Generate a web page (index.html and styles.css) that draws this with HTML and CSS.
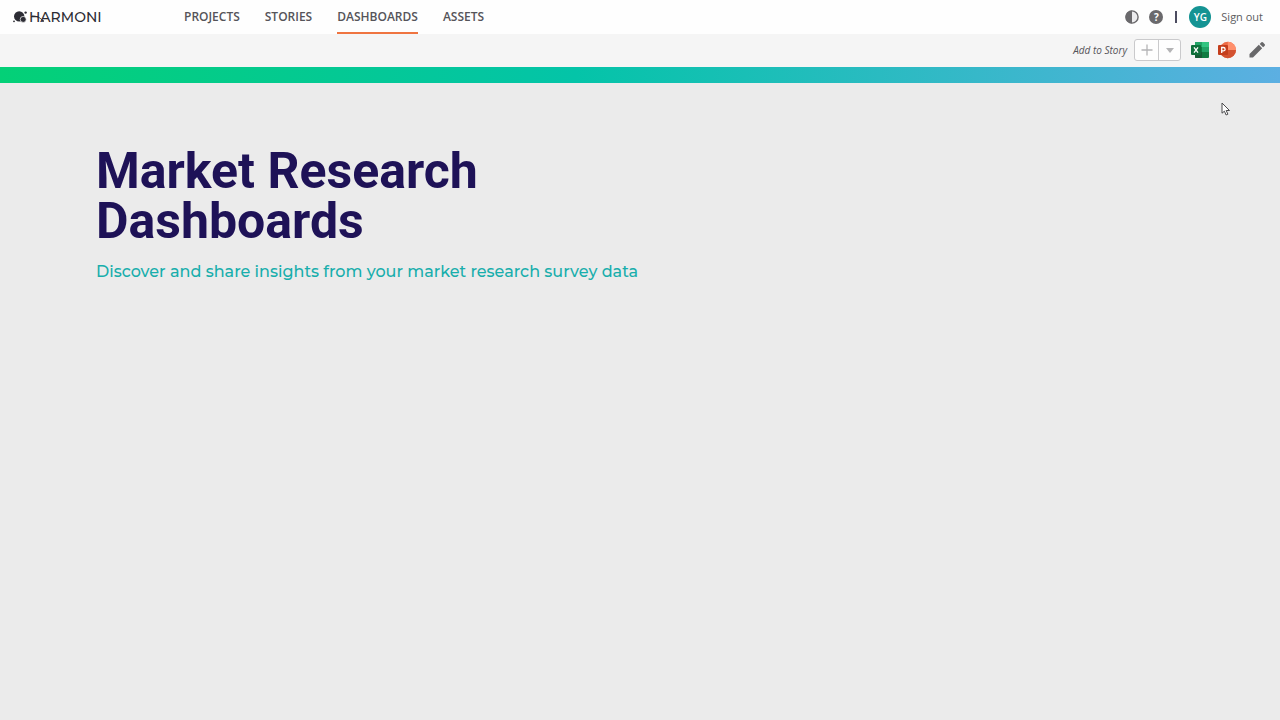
FILE: index.html
```
<!DOCTYPE html>
<html lang="en">
<head>
  <meta charset="UTF-8">
  <meta name="viewport" content="width=device-width, initial-scale=1.0">
  <title>Harmoni - Dashboards</title>
  <link rel="stylesheet" href="styles.css">
</head>
<body>

  <header class="topbar">
    <a class="logo" href="#">
      <svg class="logo-mark" viewBox="0 0 14 12" width="14" height="12" aria-hidden="true">
        <circle cx="6.2" cy="5.4" r="5.2"/>
        <circle class="ring" cx="10.2" cy="8.4" r="3"/>
        <circle cx="12.6" cy="1.6" r="1.2"/>
        <circle cx="1" cy="10.3" r="0.9"/>
      </svg>
      <span class="logo-name">HARMONI</span>
      <svg class="logo-swash" viewBox="0 0 14 8" width="14" height="8" aria-hidden="true">
        <path d="M1 1c4 0 8 1 11 5"/>
        <circle cx="12" cy="6" r="1"/>
      </svg>
    </a>

    <nav class="nav">
      <a href="#">PROJECTS</a>
      <a href="#">STORIES</a>
      <a class="active" href="#">DASHBOARDS</a>
      <a href="#">ASSETS</a>
    </nav>

    <div class="account">
      <button class="icon-btn" type="button" aria-label="Contrast">
        <svg viewBox="0 0 14 14" width="14" height="14">
          <circle cx="7" cy="7" r="6.1" fill="#ececee" stroke="#6a696c" stroke-width="1.4"/>
          <path d="M7 0.5a6.5 6.5 0 0 0 0 13z" fill="#6a696c"/>
        </svg>
      </button>
      <button class="icon-btn help" type="button" aria-label="Help">?</button>
      <span class="divider"></span>
      <span class="avatar">YG</span>
      <a class="sign-out" href="#">Sign out</a>
    </div>
  </header>

  <div class="toolbar">
    <span class="story-label" id="storyLabel">Add to Story</span>
    <div class="split" role="group" aria-labelledby="storyLabel">
      <button type="button" aria-label="Add">
        <svg viewBox="0 0 12 12" width="12" height="12">
          <path d="M6 0.5v11M0.5 6h11" stroke="#b4b4b6" stroke-width="1.3"/>
        </svg>
      </button>
      <button type="button" aria-label="Choose story">
        <svg viewBox="0 0 8 5" width="8" height="5">
          <path d="M0 0h8L4 5z" fill="#b4b4b6"/>
        </svg>
      </button>
    </div>
    <div class="exports">
      <button class="icon-btn" type="button" aria-label="Export to Excel">
        <svg viewBox="0 0 18 18" width="18" height="18">
          <rect x="4" y="1" width="14" height="16" rx="1" fill="#107c41"/>
          <path d="M5 1h6v5H4V2a1 1 0 0 1 1-1z" fill="#21a366"/>
          <path d="M11 1h6a1 1 0 0 1 1 1v4h-7z" fill="#33c481"/>
          <path d="M4 6h7v5H4z" fill="#107c41"/>
          <path d="M11 6h7v5h-7z" fill="#21a366"/>
          <path d="M4 11h7v6H5a1 1 0 0 1-1-1z" fill="#185c37"/>
          <rect x="0" y="4" width="10" height="10" rx="1" fill="#0e703b"/>
          <path d="M3 6.4l4 5.2M7 6.4l-4 5.2" stroke="#fff" stroke-width="1.3"/>
        </svg>
      </button>
      <button class="icon-btn" type="button" aria-label="Export to PowerPoint">
        <svg viewBox="0 0 18 18" width="18" height="18">
          <circle cx="9.8" cy="9" r="8.2" fill="#ed6c47"/>
          <path d="M9.8 0.8A8.2 8.2 0 0 1 18 9H9.8z" fill="#ff8f6b"/>
          <path d="M1.6 9H18a8.2 8.2 0 0 1-16.4 0z" fill="#d35230"/>
          <rect x="0" y="4" width="10" height="10" rx="1" fill="#c43e1c"/>
          <path d="M3.7 12V6.5h1.7a1.6 1.6 0 0 1 0 3.4H3.7" fill="none" stroke="#fff" stroke-width="1.3"/>
        </svg>
      </button>
    </div>
    <button class="icon-btn" type="button" aria-label="Edit">
      <svg viewBox="0 0 16 16" width="16" height="16">
        <path d="M0.5 15.5V12L9.8 2.8l3.4 3.4L4 15.5zM10.7 1.9L12.1 0.5a1.4 1.4 0 0 1 2 0l1.4 1.4a1.4 1.4 0 0 1 0 2L14.1 5.3z" fill="#68686a"/>
      </svg>
    </button>
  </div>

  <div class="banner"></div>

  <main class="content">
    <h1>Market Research<br>Dashboards</h1>
    <p>Discover and share insights from your market research survey data</p>
  </main>

  <svg class="pointer" viewBox="0 0 10 14" width="10" height="14" aria-hidden="true">
    <path d="M1 1v10.2l2.4-2 1.7 3.8 1.8-.8-1.7-3.7h3.3z"/>
  </svg>

</body>
</html>
```
FILE: styles.css
```
* {
  box-sizing: border-box;
  margin: 0;
  padding: 0;
}

body {
  font-family: 'Open Sans', sans-serif;
  font-size: 12px;
  background: #ebebeb;
  color: #555459;
  min-height: 100vh;
}

a {
  color: inherit;
  text-decoration: none;
}

button {
  font-family: inherit;
  border: none;
  background: none;
  cursor: pointer;
}

svg {
  display: block;
}

.topbar {
  display: flex;
  align-items: center;
  height: 34px;
  padding: 0 17px 0 13px;
  background: #fefefe;
}

.logo {
  position: relative;
  display: flex;
  align-items: center;
  gap: 2px;
  width: 171px;
  color: #2c2c34;
}

.logo-mark {
  fill: #2c2c34;
}

.logo-mark .ring {
  stroke: #fefefe;
  stroke-width: 0.7;
}

.logo-name {
  font-family: Montserrat, Inter, sans-serif;
  font-size: 14px;
  font-weight: 500;
  line-height: 20px;
}

.logo-swash {
  position: absolute;
  left: 18px;
  top: 8px;
  fill: #2c2c34;
}

.logo-swash path {
  fill: none;
  stroke: #2c2c34;
}

.nav {
  display: flex;
  align-self: stretch;
  gap: 25px;
  font-weight: 600;
}

.nav a {
  padding-top: 1px;
  line-height: 31px;
  border-bottom: 2px solid transparent;
}

.nav .active {
  border-color: #ef7440;
}

.account {
  display: flex;
  align-items: center;
  gap: 10px;
  margin-left: auto;
}

.icon-btn {
  display: flex;
  align-items: center;
  justify-content: center;
}

.help {
  width: 14px;
  height: 14px;
  border-radius: 50%;
  background: #6a696c;
  color: #fff;
  font-size: 10px;
  font-weight: 700;
}

.divider {
  width: 2px;
  height: 12px;
  margin: 0 2px;
  background: #4c4c60;
}

.avatar {
  width: 22px;
  height: 22px;
  border-radius: 50%;
  background: #149393;
  color: #fff;
  font-size: 10px;
  font-weight: 600;
  line-height: 22px;
  text-align: center;
}

.sign-out {
  font-size: 11px;
  font-weight: 500;
  line-height: 16px;
  color: #5c5c60;
}

.toolbar {
  display: flex;
  align-items: center;
  justify-content: flex-end;
  height: 33px;
  padding: 0 15px 1px;
  background: #f5f5f5;
}

.story-label {
  margin-right: 7px;
  font-size: 10px;
  font-style: italic;
}

.split {
  display: flex;
  height: 22px;
  margin-right: 10px;
  border: 1px solid #cacacc;
  border-radius: 3px;
  background: #fefefe;
}

.split button {
  display: flex;
  align-items: center;
  justify-content: center;
  width: 23px;
}

.split button + button {
  width: 22px;
  border-left: 1px solid #cacacc;
}

.exports {
  display: flex;
  gap: 9px;
  margin-right: 13px;
}

.banner {
  height: 16px;
  background: linear-gradient(90deg, #04d077, #04c4a8 45%, #5cafe2);
}

.content {
  padding: 63px 96px;
}

.content h1 {
  font-family: Roboto, sans-serif;
  font-size: 50px;
  font-weight: 700;
  line-height: 50px;
  color: #1e1257;
}

.content p {
  margin-top: 14px;
  font-family: Montserrat, Inter, sans-serif;
  font-size: 16px;
  font-weight: 500;
  line-height: 24px;
  color: #18aeac;
}

.pointer {
  position: absolute;
  top: 102px;
  right: 49px;
}

.pointer path {
  fill: #fff;
  stroke: #4a4a4c;
}
```
